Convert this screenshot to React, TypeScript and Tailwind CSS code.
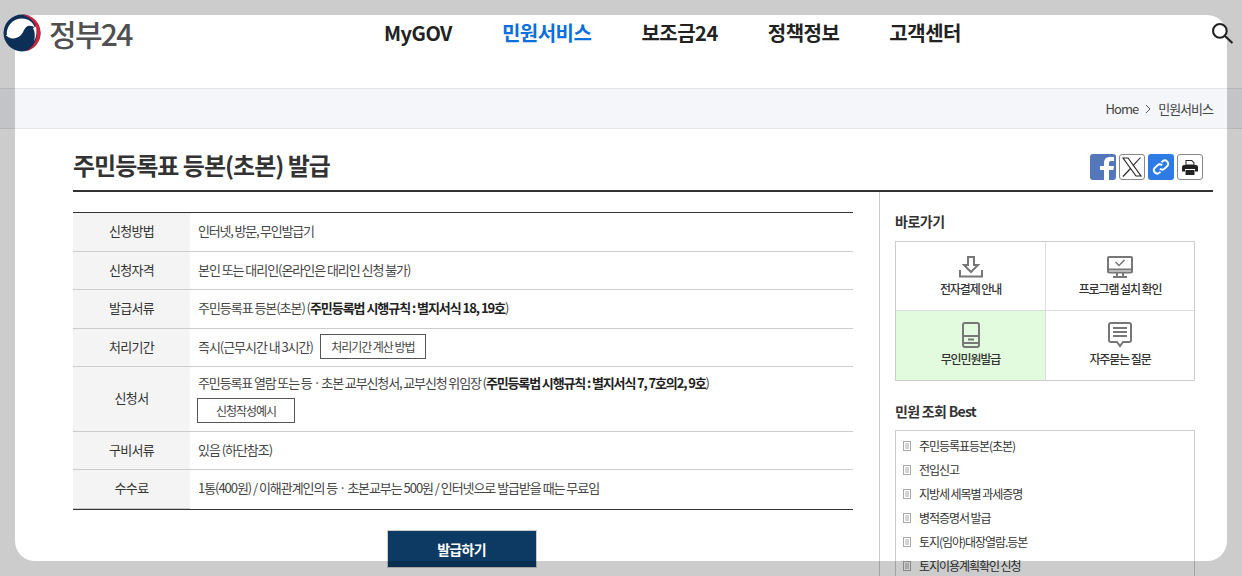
const font = "[font-family:'Noto_Sans_CJK_KR','Noto_Sans',sans-serif]";

const navItems = ["MyGOV", "민원서비스", "보조금24", "정책정보", "고객센터"];

const bestItems = [
  "주민등록표등본(초본)",
  "전입신고",
  "지방세 세목별 과세증명",
  "병적증명서 발급",
  "토지(임야)대장열람.등본",
  "토지이용계획확인 신청",
];

const Logo = () => (
  <svg width="38" height="38" viewBox="0 0 38 38">
    <circle cx="19" cy="19" r="18.500" fill="#0c2f57" />
    <path d="M19 .5A18.500 18.500 0 0 1 37.500 19c0 9-6.500 16.800-15 18.200 6.800-3 11.500-10 11.500-18.200C34 10 28 3 19 .5z" fill="#d8213b" />
    <path d="M3.800 21C3 12 10 4.500 19 4.500c6.500 0 11.500 4 13 9.500-2.500-2.600-6.500-3-9-.8-2.300 2-2.500 5.200-5 7.800-4 4-11.500 5-15.200 0z" fill="#fff" />
    <path d="M33 12.500c1 5 .8 10-2 15 1.200-4.500 1.200-9.500-1-13.500z" fill="#fff" />
  </svg>
);

const FileIcon = () => (
  <svg width="8" height="10" viewBox="0 0 8 10" fill="none" stroke="#aaa" strokeWidth="1">
    <rect x="0.500" y="0.500" width="7" height="9" />
    <path d="M2 3h4M2 5h4M2 7h4" />
  </svg>
);

const QuickIcon = ({ name }: { name: string }) => {
  if (name === "down")
    return (
      <svg width="24" height="22" viewBox="0 0 24 22" fill="none" stroke="#777" strokeWidth="2">
        <path d="M9 1h6v8h4l-7 7-7-7h4z" />
        <path d="M1 14v6.500h22V14" />
      </svg>
    );
  if (name === "monitor")
    return (
      <svg width="26" height="22" viewBox="0 0 26 22" fill="none" stroke="#777" strokeWidth="2">
        <rect x="1" y="1" width="24" height="15.500" rx="1" />
        <path d="M1 13.500h24" />
        <path d="M8.500 6l3.500 3.500 5.500-5.500" strokeWidth="1.500" />
        <path d="M10 16v4M16 16v4M6 21h14" />
      </svg>
    );
  if (name === "kiosk")
    return (
      <svg width="18" height="26" viewBox="0 0 18 26" fill="none" stroke="#777" strokeWidth="2">
        <rect x="1" y="1" width="16" height="24" rx="2" />
        <path d="M1 14h16M1 21h16" />
        <path d="M6 17.500h6" />
      </svg>
    );
  return (
    <svg width="24" height="26" viewBox="0 0 24 26" fill="none" stroke="#777" strokeWidth="2">
      <path d="M3 1h18a2 2 0 0 1 2 2v15a2 2 0 0 1-2 2h-6l-3 4-3-4H3a2 2 0 0 1-2-2V3a2 2 0 0 1 2-2z" />
      <path d="M5 6h14M5 10h14M5 14h14" />
    </svg>
  );
};

const Row = ({ label, children, h }: { label: string; children: React.ReactNode; h: string }) => (
  <div className={`flex border-b border-[#ccc] ${h}`}>
    <div className="w-[117px] shrink-0 bg-[#f4f4f4] flex items-center justify-center pb-[2px] tracking-[-0.7px] text-[#333]">
      {label}
    </div>
    <div className="flex-1 pl-2 pb-[2px] flex flex-col justify-center text-[#444]">{children}</div>
  </div>
);

export default function App() {
  return (
    <div className={`relative w-[1242px] h-[576px] overflow-hidden bg-white ${font}`}>
      {/* dimmed frame round the window */}
      <div className="absolute left-[15px] top-[15px] w-[1212px] h-[546px] rounded-[20px] shadow-[0_0_0_400px_rgba(0,0,0,0.2)] z-10 pointer-events-none" />

      <header className="relative z-20 h-[88px] flex">
        <div className="absolute left-[3px] top-[14px] flex items-center">
          <Logo />
          <span className="ml-[8px] text-[30px] leading-[38px] font-medium tracking-[-1.7px] text-[#505050]">정부24</span>
        </div>
        <nav className="flex gap-[50px] pl-[384px] pt-[18px] h-fit">
          {navItems.map((item, i) => (
            <a
              key={item}
              className={`text-[20px] leading-[30px] font-bold tracking-[-0.5px] ${i === 1 ? "text-[#0b6fde]" : "text-[#222]"}`}
            >
              {item}
            </a>
          ))}
        </nav>
        <svg className="absolute left-[1212px] top-[23px]" width="22" height="21" viewBox="0 0 21 20" fill="none" stroke="#222" strokeWidth="2">
          <circle cx="7.500" cy="7.500" r="6.500" />
          <path d="M12.500 12.500l7 6.500" />
        </svg>
      </header>

      <div className="h-[41px] border-y border-[#e3e5e9] bg-[#f4f6fa] flex items-center justify-end pr-[29px] text-[13px] tracking-[-1px] text-[#444]">
        <span>Home</span>
        <svg className="mx-[7px]" width="6" height="10" viewBox="0 0 6 10" fill="none" stroke="#555">
          <path d="M1 1l4 4-4 4" />
        </svg>
        <span>민원서비스</span>
      </div>

      <div className="pl-[73px] pr-[29px]">
        <div className="h-[63px] flex items-end justify-between border-b-2 border-[#333] pb-[10px] pr-[10px]">
          <h1 className="text-[24px] leading-[30px] font-bold tracking-[-1px] text-[#333]">주민등록표 등본(초본) 발급</h1>
          <div className="flex gap-[3px]">
            <div className="w-[26px] h-[26px] rounded-[3px] bg-[#5476bb] overflow-hidden flex justify-end items-end">
              <svg width="22" height="24" viewBox="0 0 22 24" fill="#fff">
                <path d="M10 24V14H6v-4h4V7c0-4 2.500-6 6-6h4v4h-3c-1.500 0-2 .7-2 2v3h5l-.7 4H15v10z" />
              </svg>
            </div>
            <div className="w-[26px] h-[26px] rounded-[3px] border border-[#888] flex items-center justify-center">
              <svg width="22" height="22" viewBox="0 0 22 22" fill="none" stroke="#222" strokeWidth="1.100">
                <path d="M2 2h5l13 18h-5zM19.500 1.500l-7.700 8.300M9.500 12.500 2 20.500" />
              </svg>
            </div>
            <div className="w-[26px] h-[26px] rounded-[3px] bg-[#2f7be5] flex items-center justify-center">
              <svg width="18" height="18" viewBox="0 0 16 16" fill="none" stroke="#fff" strokeWidth="1.700">
                <path d="M7 9.500a3 3 0 0 0 4.200 0l2.500-2.500a3 3 0 0 0-4.200-4.200L8.500 3.800" />
                <path d="M9 6.500a3 3 0 0 0-4.200 0L2.300 9a3 3 0 0 0 4.200 4.200l1-1" />
              </svg>
            </div>
            <div className="w-[26px] h-[26px] rounded-[3px] border border-[#888] flex items-center justify-center">
              <svg width="18" height="17" viewBox="0 0 18 17" fill="#222">
                <path d="M4.500 1h6.500l2.500 2.500V6h-9zM5.500 2v3.500h7V4L10.500 2z" fillRule="evenodd" />
                <path d="M1 8a2 2 0 0 1 2-2h12a2 2 0 0 1 2 2v4.500h-3V10H4v2.500H1z" />
                <path d="M4.500 11h9v5h-9z" />
              </svg>
            </div>
          </div>
        </div>

        <div className="flex">
          <main className="w-[780px] pt-[20px]">
            <div className="border-t border-[#333] text-[13px] tracking-[-1.05px] leading-[20px]">
              <Row label="신청방법" h="h-[39px]"><span className="tracking-[-1.2px]">인터넷, 방문, 무인발급기</span></Row>
              <Row label="신청자격" h="h-[38px]">본인 또는 대리인(온라인은 대리인 신청 불가)</Row>
              <Row label="발급서류" h="h-[39px]">
                <p>
                  주민등록표 등본(초본) (<b className="font-bold text-[#222]">주민등록법 시행규칙 : 별지서식 18, 19호</b>)
                </p>
              </Row>
              <Row label="처리기간" h="h-[38px]">
                <div className="flex items-center">
                  <span>즉시(근무시간 내 3시간)</span>
                  <span className="ml-[7px] w-[106px] h-[25px] border border-[#555] flex items-center justify-center text-[12px]">
                    처리기간 계산 방법
                  </span>
                </div>
              </Row>
              <Row label="신청서" h="h-[65px]">
                <p className="tracking-[-1.13px]">
                  주민등록표 열람 또는 등 · 초본 교부신청서, 교부신청 위임장 (<b className="font-bold text-[#222]">주민등록법 시행규칙 : 별지서식 7, 7호의2, 9호</b>)
                </p>
                <span className="mt-[5px] -ml-px w-[98px] h-[25px] border border-[#555] flex items-center justify-center text-[12px]">
                  신청작성예시
                </span>
              </Row>
              <Row label="구비서류" h="h-[38px]">있음 (하단참조)</Row>
              <div className="flex h-[40px] border-b border-[#333]">
                <div className="w-[117px] shrink-0 bg-[#f4f4f4] border-b border-[#ccc] flex items-center justify-center pb-[3px] tracking-[-0.7px] text-[#333]">
                  수수료
                </div>
                <div className="flex-1 pl-2 pb-[3px] flex items-center text-[#444]">
                  1통(400원) / 이해관계인의 등 · 초본교부는 500원 / 인터넷으로 발급받을 때는 무료임
                </div>
              </div>
            </div>
            <div className="flex justify-center mt-[20px] pr-[3px]">
              <button className="w-[150px] h-[38px] bg-[#0d3a63] border border-[#ccc] text-white text-[14px] font-bold tracking-[-0.7px]">
                발급하기
              </button>
            </div>
          </main>

          <aside className="ml-[26px] w-[334px] h-[400px] border-l border-[#ccc] pl-[15px] pt-[18px] text-[13px]">
            <h2 className="text-[14px] leading-[22px] font-bold tracking-[-0.5px] text-[#333]">바로가기</h2>
            <div className="mt-[9px] w-[300px] h-[140px] grid grid-cols-[150px_1fr] grid-rows-2 border border-[#ccc] tracking-[-1.1px] text-[12px] text-[#333] font-medium">
              <div className="flex flex-col items-center justify-end pb-[12px] gap-[2px] border-r border-b border-[#ddd]">
                <QuickIcon name="down" />
                <span>전자결제 안내</span>
              </div>
              <div className="flex flex-col items-center justify-end pb-[12px] gap-[2px] border-b border-[#ddd]">
                <QuickIcon name="monitor" />
                <span>프로그램 설치 확인</span>
              </div>
              <div className="flex flex-col items-center justify-end pb-[12px] gap-[2px] border-r border-[#ddd] bg-[#e2fade]">
                <QuickIcon name="kiosk" />
                <span>무인민원발급</span>
              </div>
              <div className="flex flex-col items-center justify-end pb-[12px] gap-[2px]">
                <QuickIcon name="faq" />
                <span>자주묻는 질문</span>
              </div>
            </div>
            <h2 className="mt-[19px] text-[14px] leading-[22px] font-bold tracking-[-0.7px] text-[#333]">민원 조회 Best</h2>
            <ul className="mt-[8px] w-[300px] h-[170px] border border-[#ccc] pl-[7px] pt-[3px] text-[12px] tracking-[-1.05px] text-[#333]">
              {bestItems.map((item) => (
                <li key={item} className="h-[24px] flex items-center gap-[8px]">
                  <FileIcon />
                  <span>{item}</span>
                </li>
              ))}
            </ul>
          </aside>
        </div>
      </div>
    </div>
  );
}
